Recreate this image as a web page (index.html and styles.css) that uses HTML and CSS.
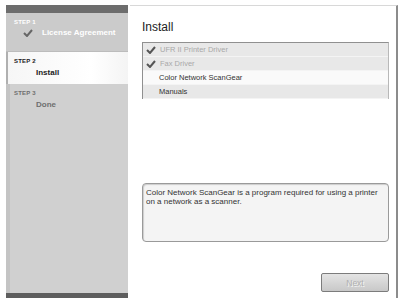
FILE: index.html
```html
<!DOCTYPE html>
<html lang="en">
<head>
  <meta charset="UTF-8" />
  <title>Install</title>
  <link rel="stylesheet" href="styles.css">
</head>
<body>

  <div class="window">
    <div class="sidebar">
      <div class="side-top"></div>
      <div class="step done">
        <span class="step-label">STEP 1</span>
        <span class="step-name">
          <svg class="check" width="10" height="8" viewBox="0 0 10 8"><path d="M1 4 L4 7 L9 1" fill="none" stroke="#666" stroke-width="2"/></svg>
          License Agreement
        </span>
      </div>
      <div class="step current">
        <span class="step-label">STEP 2</span>
        <span class="step-name">Install</span>
      </div>
      <div class="step todo">
        <span class="step-label">STEP 3</span>
        <span class="step-name">Done</span>
      </div>
      <div class="side-bottom"></div>
    </div>

    <div class="main">
      <h1>Install</h1>

      <ul class="item-list">
        <li class="item installed">
          <svg class="check" width="10" height="8" viewBox="0 0 10 8"><path d="M1 4 L4 7 L9 1" fill="none" stroke="#555" stroke-width="2"/></svg>
          UFR II Printer Driver
        </li>
        <li class="item installed">
          <svg class="check" width="10" height="8" viewBox="0 0 10 8"><path d="M1 4 L4 7 L9 1" fill="none" stroke="#555" stroke-width="2"/></svg>
          Fax Driver
        </li>
        <li class="item selected">Color Network ScanGear</li>
        <li class="item">Manuals</li>
      </ul>

      <div class="description">
        Color Network ScanGear is a program required for using a printer on a network as a scanner.
      </div>

      <div class="actions">
        <button class="next-btn" disabled>Next</button>
      </div>
    </div>
  </div>

</body>
</html>
```

FILE: styles.css
```css
body {
  margin: 0;
  background: #fff;
  font-family: 'Liberation Sans', Arial, sans-serif;
}

.window {
  display: flex;
  padding: 5px 2px 0 6px;
  height: 293px;
}

.sidebar {
  width: 122px;
  display: flex;
  flex-direction: column;
  background: #d0d0d0;
  box-shadow: inset 4px 0 0 #c4c4c4;
}

.side-top {
  height: 8px;
  background: #6d6d6d;
}

.side-bottom {
  height: 5px;
  background: #5e5e5e;
  margin-top: auto;
}

.step {
  display: flex;
  flex-direction: column;
  padding: 6px 0 0 8px;
}

.step-label {
  font-size: 6px;
  font-weight: bold;
  letter-spacing: 0.2px;
}

.step-name {
  display: flex;
  align-items: center;
  font-size: 8px;
  font-weight: bold;
  padding-left: 22px;
  margin-top: 4px;
}

.step.done {
  height: 32px;
  color: #fff;
  background: #cbcbcb;
  border-bottom: 1px solid #bcbcbc;
}

.step.done .step-name {
  padding-left: 9px;
  margin-top: 3px;
}

.step.done .check {
  margin-right: 9px;
}

.step.current {
  height: 26px;
  color: #222;
  background: linear-gradient(to right, #f6f6f6, #fff 70%, #f4f4f4);
  box-shadow: inset 2px 0 0 #b0b0b0;
}

.step.todo {
  color: #6e6e6e;
}

.main {
  flex: 1;
  margin-left: 2px;
  border-top: 1px solid #d8d8d8;
  border-right: 2px solid #8c8c8c;
  padding: 0 7px 0 12px;
  display: flex;
  flex-direction: column;
}

.main h1 {
  font-size: 12px;
  font-weight: normal;
  color: #222;
  margin: 14px 0 8px;
}

.item-list {
  list-style: none;
  margin: 0;
  padding: 0;
  border: 1px solid #b8b8b8;
  border-top-color: #909090;
  border-left-color: #909090;
  border-bottom: none;
}

.item {
  height: 13px;
  display: flex;
  align-items: center;
  font-size: 7.5px;
  color: #333;
  background: #e8e8e8;
  padding-left: 16px;
  border-bottom: 1px solid #f4f4f4;
}

.item.installed {
  color: #a8a8a8;
  padding-left: 3px;
}

.item .check {
  margin-right: 4px;
}

.item.selected {
  background: #fafafa;
}

.description {
  margin-top: 84px;
  height: 49px;
  padding: 4px 3px;
  font-size: 8px;
  line-height: 9px;
  color: #333;
  background: #f4f4f4;
  border: 1px solid #9a9a9a;
  border-radius: 4px;
  box-shadow: inset 1px 1px 1px #ccc;
}

.actions {
  display: flex;
  justify-content: flex-end;
  margin-top: auto;
  padding-bottom: 6px;
}

.next-btn {
  width: 68px;
  height: 19px;
  font-family: inherit;
  font-size: 8.5px;
  color: #b0b0b0;
  background: linear-gradient(to bottom, #e4e4e4, #c8c8c8);
  border: 1px solid #7c7c7c;
  border-radius: 2px;
  text-shadow: 1px 1px 0 #f4f4f4;
}
```
